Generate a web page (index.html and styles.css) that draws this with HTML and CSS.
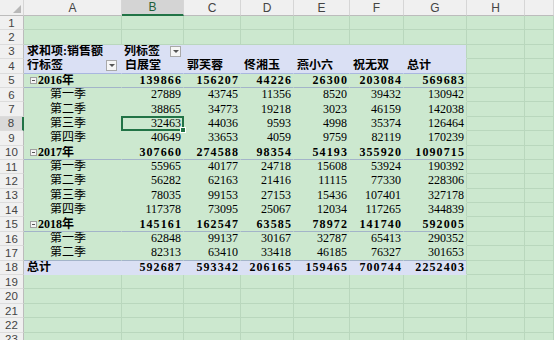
FILE: index.html
```html
<!DOCTYPE html>
<html lang="zh-CN">
<head>
    <meta charset="UTF-8">
    <title>数据透视表</title>
    <link rel="stylesheet" href="styles.css">
</head>
<body>

<table class="sheet">
    <colgroup>
        <col style="width:24px"><col style="width:98px"><col style="width:62px"><col style="width:57px">
        <col style="width:53px"><col style="width:56px"><col style="width:54px"><col style="width:63px">
        <col style="width:58px"><col style="width:29px">
    </colgroup>
    <thead>
        <tr>
            <th class="corner"><span class="tri"></span></th>
            <th>A</th><th class="on">B</th><th>C</th><th>D</th><th>E</th><th>F</th><th>G</th><th>H</th><th></th>
        </tr>
    </thead>
    <tbody>
        <tr><th class="rh">1</th><td></td><td></td><td></td><td></td><td></td><td></td><td></td><td></td><td></td></tr>
        <tr><th class="rh">2</th><td></td><td></td><td></td><td></td><td></td><td></td><td></td><td></td><td></td></tr>
        <tr class="hd">
            <th class="rh">3</th>
            <td class="p b">求和项:销售额</td>
            <td class="p b">列标签<span class="dd"></span></td>
            <td class="p"></td><td class="p"></td><td class="p"></td><td class="p"></td><td class="p e"></td>
            <td></td><td></td>
        </tr>
        <tr class="hd line">
            <th class="rh">4</th>
            <td class="p b">行标签<span class="dd dd-a"></span></td>
            <td class="p b nm">白展堂</td><td class="p b nm">郭芙蓉</td><td class="p b nm">佟湘玉</td>
            <td class="p b nm">燕小六</td><td class="p b nm">祝无双</td><td class="p b nm e">总计</td>
            <td></td><td></td>
        </tr>
        <tr class="yr">
            <th class="rh">5</th>
            <td class="p b"><span class="tg"></span>2016年</td>
            <td class="p n">139866</td><td class="p n">156207</td><td class="p n">44226</td>
            <td class="p n">26300</td><td class="p n">203084</td><td class="p n e">569683</td>
            <td></td><td></td>
        </tr>
        <tr>
            <th class="rh">6</th>
            <td class="p q">第一季</td>
            <td class="p n">27889</td><td class="p n">43745</td><td class="p n">11356</td>
            <td class="p n">8520</td><td class="p n">39432</td><td class="p n e">130942</td>
            <td></td><td></td>
        </tr>
        <tr>
            <th class="rh">7</th>
            <td class="p q">第二季</td>
            <td class="p n">38865</td><td class="p n">34773</td><td class="p n">19218</td>
            <td class="p n">3023</td><td class="p n">46159</td><td class="p n e">142038</td>
            <td></td><td></td>
        </tr>
        <tr>
            <th class="rh on">8</th>
            <td class="p q">第三季</td>
            <td class="p n sel">32463</td><td class="p n">44036</td><td class="p n">9593</td>
            <td class="p n">4998</td><td class="p n">35374</td><td class="p n e">126464</td>
            <td></td><td></td>
        </tr>
        <tr>
            <th class="rh">9</th>
            <td class="p q">第四季</td>
            <td class="p n">40649</td><td class="p n">33653</td><td class="p n">4059</td>
            <td class="p n">9759</td><td class="p n">82119</td><td class="p n e">170239</td>
            <td></td><td></td>
        </tr>
        <tr class="yr">
            <th class="rh">10</th>
            <td class="p b"><span class="tg"></span>2017年</td>
            <td class="p n">307660</td><td class="p n">274588</td><td class="p n">98354</td>
            <td class="p n">54193</td><td class="p n">355920</td><td class="p n e">1090715</td>
            <td></td><td></td>
        </tr>
        <tr>
            <th class="rh">11</th>
            <td class="p q">第一季</td>
            <td class="p n">55965</td><td class="p n">40177</td><td class="p n">24718</td>
            <td class="p n">15608</td><td class="p n">53924</td><td class="p n e">190392</td>
            <td></td><td></td>
        </tr>
        <tr>
            <th class="rh">12</th>
            <td class="p q">第二季</td>
            <td class="p n">56282</td><td class="p n">62163</td><td class="p n">21416</td>
            <td class="p n">11115</td><td class="p n">77330</td><td class="p n e">228306</td>
            <td></td><td></td>
        </tr>
        <tr>
            <th class="rh">13</th>
            <td class="p q">第三季</td>
            <td class="p n">78035</td><td class="p n">99153</td><td class="p n">27153</td>
            <td class="p n">15436</td><td class="p n">107401</td><td class="p n e">327178</td>
            <td></td><td></td>
        </tr>
        <tr>
            <th class="rh">14</th>
            <td class="p q">第四季</td>
            <td class="p n">117378</td><td class="p n">73095</td><td class="p n">25067</td>
            <td class="p n">12034</td><td class="p n">117265</td><td class="p n e">344839</td>
            <td></td><td></td>
        </tr>
        <tr class="yr">
            <th class="rh">15</th>
            <td class="p b"><span class="tg"></span>2018年</td>
            <td class="p n">145161</td><td class="p n">162547</td><td class="p n">63585</td>
            <td class="p n">78972</td><td class="p n">141740</td><td class="p n e">592005</td>
            <td></td><td></td>
        </tr>
        <tr>
            <th class="rh">16</th>
            <td class="p q">第一季</td>
            <td class="p n">62848</td><td class="p n">99137</td><td class="p n">30167</td>
            <td class="p n">32787</td><td class="p n">65413</td><td class="p n e">290352</td>
            <td></td><td></td>
        </tr>
        <tr class="pre-tot">
            <th class="rh">17</th>
            <td class="p q">第二季</td>
            <td class="p n">82313</td><td class="p n">63410</td><td class="p n">33418</td>
            <td class="p n">46185</td><td class="p n">76327</td><td class="p n e">301653</td>
            <td></td><td></td>
        </tr>
        <tr class="hd tot">
            <th class="rh">18</th>
            <td class="p b">总计</td>
            <td class="p n">592687</td><td class="p n">593342</td><td class="p n">206165</td>
            <td class="p n">159465</td><td class="p n">700744</td><td class="p n e">2252403</td>
            <td></td><td></td>
        </tr>
        <tr><th class="rh">19</th><td></td><td></td><td></td><td></td><td></td><td></td><td></td><td></td><td></td></tr>
        <tr><th class="rh">20</th><td></td><td></td><td></td><td></td><td></td><td></td><td></td><td></td><td></td></tr>
        <tr><th class="rh">21</th><td></td><td></td><td></td><td></td><td></td><td></td><td></td><td></td><td></td></tr>
        <tr><th class="rh">22</th><td></td><td></td><td></td><td></td><td></td><td></td><td></td><td></td><td></td></tr>
        <tr><th class="rh">23</th><td></td><td></td><td></td><td></td><td></td><td></td><td></td><td></td><td></td></tr>
    </tbody>
</table>

</body>
</html>
```

FILE: styles.css
```css
body {
    margin: 0;
    background: #cce8cf;
    overflow: hidden;
}
.sheet {
    border-collapse: separate;
    border-spacing: 0;
    table-layout: fixed;
    width: 554px;
    font-family: "Liberation Serif", "Noto Sans CJK SC", serif;
    font-size: 12px;
    color: #000;
}
.sheet td,
.sheet th {
    box-sizing: border-box;
    height: 14.4px;
    padding: 0 2px;
    border-right: 1px solid #b9d7bd;
    border-bottom: 1px solid #b9d7bd;
    line-height: 13px;
    white-space: nowrap;
    overflow: hidden;
}
.sheet thead th {
    height: 16px;
    background: #f0f0f0;
    border-right-color: #d6d6d6;
    border-bottom-color: #bcbcbc;
    font: 12px "Liberation Sans", sans-serif;
    color: #444;
    text-align: center;
}
.sheet thead th.on {
    background: #d4d4d4;
    border-bottom: 2px solid #217346;
    color: #1f5f3a;
}
.corner {
    position: relative;
}
.tri {
    position: absolute;
    right: 2px;
    bottom: 2px;
    width: 0;
    height: 0;
    border-left: 8px solid transparent;
    border-bottom: 8px solid #b8b8b8;
}
.sheet th.rh {
    background: #f0f0f0;
    border-right-color: #bcbcbc;
    border-bottom-color: #dcdcdc;
    font: 11.5px "Liberation Sans", sans-serif;
    color: #444;
    text-align: center;
    font-weight: normal;
    padding: 0;
}
.sheet th.rh.on {
    background: #d9d9d9;
    border-right: 2px solid #217346;
}

/* pivot area */
.sheet td.p {
    border-right-color: transparent;
    border-bottom-color: transparent;
}
.sheet td.p.e {
    border-right-color: #b9d7bd;
}
.hd td.p {
    background: #dae0f4;
}
.sheet .line td.p {
    border-bottom-color: #a9b7df;
}
.sheet .yr td.p,
.sheet .pre-tot td.p {
    border-bottom-color: #a3b4c9;
}
.b {
    font-weight: bold;
}
.sheet td:first-of-type {
    padding-left: 3px;
}
.sheet td.q {
    padding-left: 26px;
}
.sheet td.nm {
    padding-left: 3px;
}
.n {
    text-align: right;
}
.yr .n,
.tot .n {
    font-weight: bold;
    letter-spacing: 1.1px;
    padding-right: 1px;
}
.dd {
    float: right;
    position: relative;
    width: 11px;
    height: 11px;
    margin-top: 1px;
    box-sizing: border-box;
    border: 1px solid #a9a9a9;
    background: #f6f6f6;
}
.dd::after {
    content: "";
    position: absolute;
    left: 2px;
    top: 3px;
    border-left: 3px solid transparent;
    border-right: 3px solid transparent;
    border-top: 3px solid #555;
}
.dd-a {
    margin-right: 2px;
}
.tg {
    display: inline-block;
    position: relative;
    width: 7px;
    height: 7px;
    margin: 0 1px 0 3px;
    box-sizing: border-box;
    border: 1px solid #a0a0a0;
    background: #f4f4f4;
    vertical-align: 0;
}
.tg::after {
    content: "";
    position: absolute;
    left: 1px;
    top: 2px;
    width: 3px;
    height: 1px;
    background: #555;
}
.sheet td.sel {
    position: relative;
    overflow: visible;
}
.sel::after {
    content: "";
    position: absolute;
    left: -1px;
    top: -1px;
    right: -1px;
    bottom: -1px;
    border: 2px solid #217346;
}
.sel::before {
    content: "";
    position: absolute;
    right: -3px;
    bottom: -3px;
    width: 4px;
    height: 4px;
    background: #217346;
    border: 1px solid #fff;
    z-index: 1;
}
```
